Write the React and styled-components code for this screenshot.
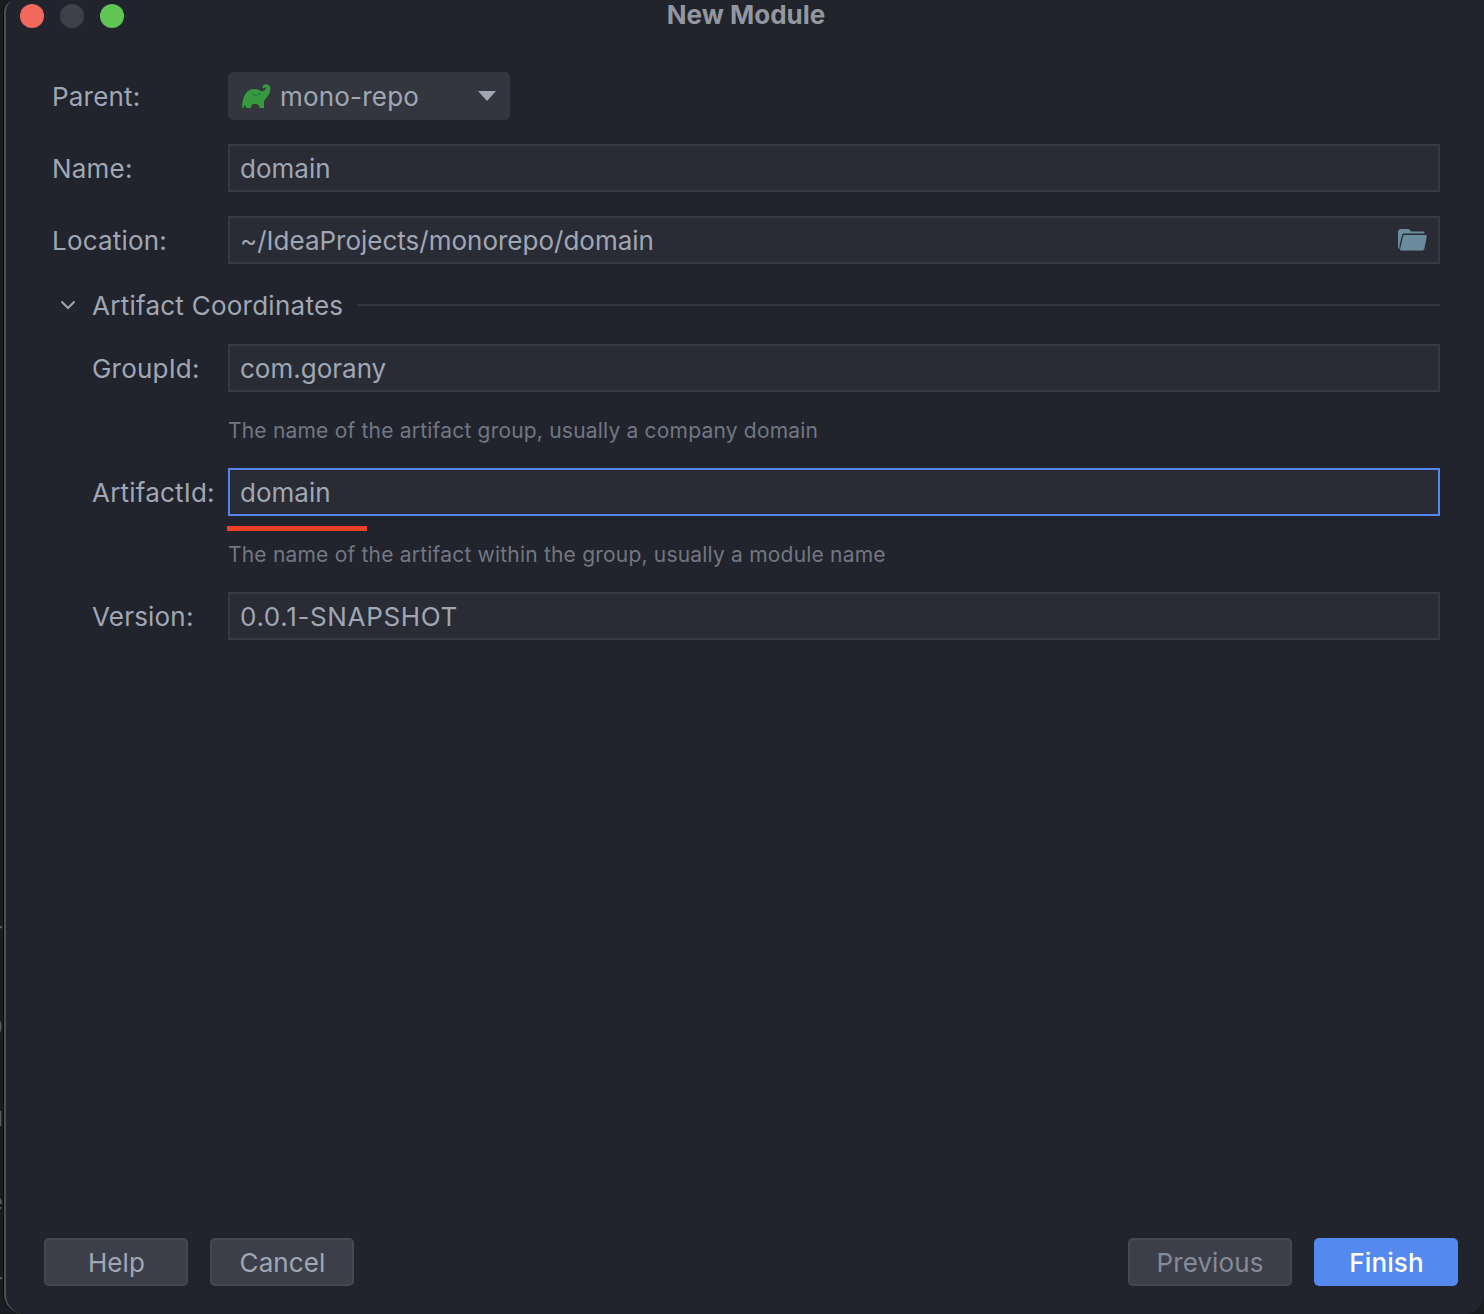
import styled, { createGlobalStyle } from 'styled-components';

const Global = createGlobalStyle`
  html, body { margin: 0; background: #1a1c20; }
  * { box-sizing: border-box; }
`;

function Elephant() {
  return (
    <ElephantSvg viewBox="0 0 29 24">
      <path
        fill="#389a3f"
        d="M0 24C0 17 2 10 6 7C9 4.8 14 4.6 17 6C19 7 21 7.8 22.6 6.6C24 5.5 24 3.6 23 3.4C22.2 3.3 21.8 4 22 4.8C20.6 4.6 19.9 3 20.8 1.8C22 .2 25 -.4 27 1.2C29 3 28.4 7 27 10C26 12.4 24.5 14 23.2 15.2C22.4 16 22 17 22 18.5V24H17.5C17.3 22 16.8 20.6 15 20.2C13 19.8 12 19.8 10.8 20.2C9.6 20.6 9.2 22.4 9 24H4C4 22.6 3.6 21.4 2.7 21.4C1.8 21.4 1.6 22.6 1.5 24Z"
      />
      <path fill="none" stroke="#2a6b31" strokeWidth="1" d="M10 9C11 11.5 14 12 15.5 11" />
      <circle cx="17.5" cy="9.8" r="0.9" fill="#1f5a27" />
    </ElephantSvg>
  );
}

function FolderIcon() {
  return (
    <FolderSvg viewBox="0 0 29 22">
      <path
        fill="#6b8c9c"
        d="M0 3C0 1.3 1.2 0 3 0H9.5C10.8 0 11.5 .6 12.2 1.5L13 2.6H25C26.2 2.6 26.5 3.2 26.5 4.4H6.5C5.2 4.4 4.4 5 4 6.4L1.8 15.5H1.6V20C.6 19.6 0 18.8 0 17.6Z"
      />
      <path
        fill="#6b8c9c"
        d="M6.8 6H27.4C28.4 6 29 6.6 28.8 7.6L26.4 19.4C26.1 20.8 25.3 21.4 24 21.4H2.4C1.9 21.4 1.9 21 2 20.6L5 7.4C5.2 6.4 5.8 6 6.8 6Z"
      />
    </FolderSvg>
  );
}

export default function App() {
  return (
    <>
      <Global />
      <Page>
        <BehindStrip>
          <BehindLetter $gap={924}>T</BehindLetter>
          <BehindLetter $gap={67}>D</BehindLetter>
          <BehindLetter $gap={66}>u</BehindLetter>
          <BehindLetter $gap={61}>e</BehindLetter>
          <BehindLetter $gap={61}>T</BehindLetter>
        </BehindStrip>
        <Dialog>
          <TitleBar>
            <Lights>
              <Light $color="#f4695d" />
              <Light $color="#3f4146" />
              <Light $color="#61c554" />
            </Lights>
            <Title>New Module</Title>
          </TitleBar>

          <Form>
            <Row>
              <Label>Parent:</Label>
              <Select>
                <Elephant />
                <SelectText>mono-repo</SelectText>
                <Caret />
              </Select>
            </Row>
            <Row>
              <Label>Name:</Label>
              <Field>domain</Field>
            </Row>
            <Row>
              <Label>Location:</Label>
              <Field>
                ~/IdeaProjects/monorepo/domain
                <FolderIcon />
              </Field>
            </Row>

            <SectionHeader>
              <Chevron viewBox="0 0 16 10">
                <path d="M1.5 1.5L8 8L14.5 1.5" fill="none" stroke="#a0a7b4" strokeWidth="2" />
              </Chevron>
              <SectionTitle>Artifact Coordinates</SectionTitle>
              <SectionLine />
            </SectionHeader>

            <Section>
              <Row>
                <SubLabel>GroupId:</SubLabel>
                <Field>com.gorany</Field>
              </Row>
              <Hint>The name of the artifact group, usually a company domain</Hint>
              <Row>
                <SubLabel>ArtifactId:</SubLabel>
                <Field $focused>domain</Field>
              </Row>
              <ErrorLine />
              <Hint $tight>The name of the artifact within the group, usually a module name</Hint>
              <Row>
                <SubLabel>Version:</SubLabel>
                <Field $spaced>0.0.1-SNAPSHOT</Field>
              </Row>
            </Section>
          </Form>

          <Footer>
            <ButtonGroup>
              <Button>Help</Button>
              <Button>Cancel</Button>
            </ButtonGroup>
            <ButtonGroup>
              <Button $disabled $wide>Previous</Button>
              <Button $primary>Finish</Button>
            </ButtonGroup>
          </Footer>
        </Dialog>
      </Page>
    </>
  );
}

const Page = styled.div`
  width: 1484px;
  height: 1314px;
  display: flex;
  overflow: hidden;
  font-family: Inter, "Liberation Sans", sans-serif;
`;

const BehindStrip = styled.div`
  width: 3px;
  flex: none;
  overflow: hidden;
  display: flex;
  flex-direction: column;
  align-items: flex-end;
`;

const BehindLetter = styled.div`
  margin-top: ${(p) => p.$gap}px;
  height: 24px;
  line-height: 24px;
  font-size: 26px;
  color: #585c64;
  flex: none;
`;

const Dialog = styled.div`
  flex: 1;
  height: 1314px;
  margin-left: 1px;
  display: flex;
  flex-direction: column;
  background: #21242c;
  border-left: 2px solid #4c4e52;
  border-bottom-left-radius: 20px;
  border-bottom-right-radius: 20px;
  border-top-left-radius: 12px;
  box-shadow: -1px 0 0 #0c0d0f;
`;

const TitleBar = styled.div`
  position: relative;
  height: 32px;
  flex: none;
  display: flex;
  align-items: center;
  justify-content: center;
`;

const Lights = styled.div`
  position: absolute;
  left: 14px;
  top: 4px;
  display: flex;
  gap: 16px;
`;

const Light = styled.span`
  width: 24px;
  height: 24px;
  border-radius: 50%;
  background: ${(p) => p.$color};
`;

const Title = styled.div`
  margin-top: -3px;
  margin-left: 2px;
  font-size: 26px;
  font-weight: 700;
  color: #93979f;
`;

const Form = styled.div`
  padding: 40px 44px 0 46px;
  display: flex;
  flex-direction: column;
  gap: 24px;
  flex: 1;
`;

const Row = styled.div`
  display: flex;
  align-items: center;
  height: 48px;
`;

const Label = styled.div`
  width: 176px;
  flex: none;
  font-size: 26px;
  letter-spacing: 0.2px;
  color: #a0a7b4;
`;

const SubLabel = styled(Label)`
  width: 136px;
`;

const Field = styled.div`
  flex: 1;
  height: 48px;
  display: flex;
  align-items: center;
  justify-content: space-between;
  padding: 0 11px 0 10px;
  font-size: 26px;
  letter-spacing: ${(p) => (p.$spaced ? '0.65px' : '0')};
  color: #a0a7b4;
  background: #292c35;
  border: 2px solid ${(p) => (p.$focused ? '#5288ec' : '#363a42')};
`;

const Select = styled.div`
  width: 282px;
  height: 48px;
  display: flex;
  align-items: center;
  padding: 0 14px 0 14px;
  background: #33363f;
  border-radius: 5px;
`;

const ElephantSvg = styled.svg`
  width: 29px;
  height: 24px;
  flex: none;
`;

const SelectText = styled.span`
  margin-left: 9px;
  flex: 1;
  font-size: 26px;
  letter-spacing: 0.2px;
  color: #a0a7b4;
`;

const Caret = styled.span`
  width: 0;
  height: 0;
  border-left: 9px solid transparent;
  border-right: 9px solid transparent;
  border-top: 10px solid #a0a7b4;
`;

const FolderSvg = styled.svg`
  width: 29px;
  height: 22px;
  flex: none;
`;

const SectionHeader = styled.div`
  height: 32px;
  margin-top: 1px;
  margin-bottom: -1px;
  display: flex;
  align-items: center;
`;

const Chevron = styled.svg`
  width: 16px;
  height: 10px;
  margin-left: 8px;
  flex: none;
`;

const SectionTitle = styled.div`
  margin-left: 16px;
  font-size: 26px;
  letter-spacing: 0.25px;
  color: #a0a7b4;
`;

const SectionLine = styled.div`
  flex: 1;
  height: 2px;
  margin-left: 14px;
  background: #33363e;
`;

const Section = styled.div`
  padding-left: 40px;
  display: flex;
  flex-direction: column;
`;

const Hint = styled.div`
  height: 28px;
  margin: ${(p) => (p.$tight ? '10px' : '25px')} 0 23px 136px;
  line-height: 28px;
  font-size: 21px;
  letter-spacing: 0.2px;
  color: #727783;
`;

const ErrorLine = styled.div`
  width: 140px;
  height: 5px;
  margin: 10px 0 0 135px;
  background: #ef4126;
`;

const Footer = styled.div`
  flex: none;
  display: flex;
  justify-content: space-between;
  padding: 0 26px 28px 38px;
`;

const ButtonGroup = styled.div`
  display: flex;
  gap: 22px;
`;

const Button = styled.div`
  width: ${(p) => (p.$wide ? '164px' : '144px')};
  height: 48px;
  display: flex;
  align-items: center;
  justify-content: center;
  padding-left: ${(p) => (p.$wide ? '0' : '1px')};
  font-size: 26px;
  letter-spacing: 0.1px;
  border-radius: 5px;
  background: ${(p) => (p.$primary ? '#548af0' : '#3c3f49')};
  border: 2px solid ${(p) => (p.$primary ? '#548af0' : '#454852')};
  color: ${(p) => (p.$primary ? '#ffffff' : p.$disabled ? '#858a97' : '#a0a7b4')};
  font-weight: ${(p) => (p.$primary ? 500 : 400)};
`;
